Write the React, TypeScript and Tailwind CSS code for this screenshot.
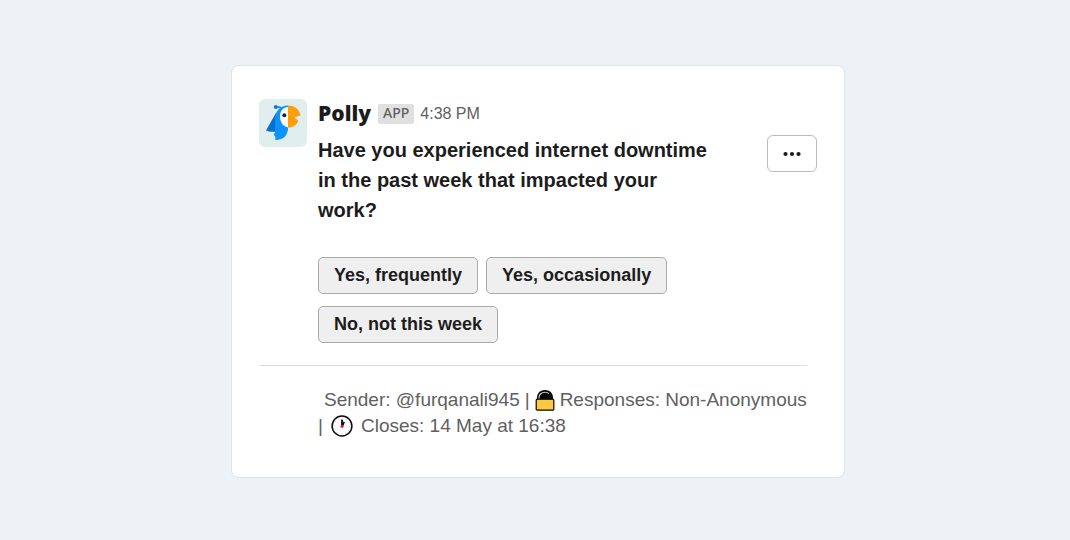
import { useState } from "react";

const QUESTION = "Have you experienced internet downtime in the past week that impacted your work?";
const OPTIONS = ["Yes, frequently", "Yes, occasionally", "No, not this week"];

function PollyAvatar() {
  return (
    <svg viewBox="0 0 48 48" className="size-12 shrink-0 rounded-md bg-[#e0eeed]" role="img" aria-label="Polly">
      <path d="M17.500 13 7 31.500q4 2 10.500 1z" fill="#0b6fcc" />
      <path d="M17 8q4-.5 6 2" fill="none" stroke="#1486ec" strokeWidth="1.600" />
      <circle cx="16.800" cy="8" r="1.900" fill="#0878db" />
      <path d="M29.200 6.500C20 6.500 16.200 13 16.200 20v11q0 2.500-1.700 5 1.800.5 1.800 2v3C25 41 29.200 36 29.200 27z" fill="#0b93ff" />
      <path d="M29.200 8c-5 0-8.200 4-8.200 9.500s3.500 10.500 8.200 11z" fill="#fff" />
      <path d="M29 6.500c7 0 11.500 4 12.500 9.700l-6 2.300 3.800 3.200c-1.500 4-5 6.800-10.300 6.800z" fill="#ff9d0a" />
      <circle cx="25.300" cy="16.200" r="2" fill="#16233f" />
    </svg>
  );
}

function LockIcon() {
  return (
    <svg viewBox="0 0 20 22" className="h-[22px] w-5" aria-hidden="true">
      <path d="M2 12V8.500C2 4 5.500 1 10 1s8 3 8 7.500V12z" fill="#050505" />
      <path d="M4 10V8.500C4 5.500 6.500 3.300 10 3.300q2.500 0 4 1.400" fill="none" stroke="#d0d0d0" strokeWidth="1.100" />
      <rect x="1.200" y="10.200" width="17.600" height="11" rx="1" fill="#ffc83d" stroke="#050505" strokeWidth="1.200" />
    </svg>
  );
}

function ClockIcon() {
  return (
    <svg viewBox="0 0 22 22" className="size-[22px]" aria-hidden="true">
      <circle cx="11" cy="11" r="9.900" fill="#fff" stroke="#0a0a0a" strokeWidth="1.500" />
      <circle cx="11" cy="11" r="7.800" fill="none" stroke="#aaa" strokeWidth="1" strokeDasharray=".6 3.484" />
      <path d="M10.100 11V5l.9-.8.9.8v6z" fill="#000" />
      <path d="m11 11 1.500-4.500 1.400.8L12 11.500z" fill="#000" />
      <circle cx="11" cy="11.200" r="1.500" fill="#e81224" />
    </svg>
  );
}

export default function App() {
  const [selected, setSelected] = useState<string | null>(null);

  return (
    <main className="flex min-h-screen items-center justify-center bg-[#ecf2f6] pt-[3px] pl-1.5 font-['Liberation_Sans',Arial,sans-serif] text-[#1d1c1d]">
      <article className="w-full max-w-[614px] rounded-lg border border-[#dde5e9] bg-white pt-[33px] pr-[27px] pb-[38px] pl-[27px]">
        <div className="flex gap-[11px]">
          <PollyAvatar />
          <div className="min-w-0 flex-1">
            <header className="flex h-[30px] items-center">
              <span className="font-['Noto_Sans',sans-serif] text-[21px] font-black">Polly</span>
              <span className="mr-1.5 ml-[7px] rounded-xs bg-[#e0e0e0] px-[5px] pb-0.5 font-['Noto_Sans',sans-serif] text-sm leading-[18px] font-medium text-[#616061]">APP</span>
              <time className="text-base text-[#616061]">4:38 PM</time>
            </header>
            <div className="flex items-start justify-between gap-4 pt-1.5">
              <h1 className="max-w-[400px] text-xl leading-[30px] font-bold">{QUESTION}</h1>
              <button aria-label="More actions" className="flex h-[37px] w-[50px] shrink-0 items-center justify-center rounded-md border border-[#bbb] bg-white">
                <svg viewBox="0 0 20 6" className="h-1.5 w-5" fill="currentColor" aria-hidden="true">
                  <circle cx="3.500" cy="3" r="2.100" />
                  <circle cx="10" cy="3" r="2.100" />
                  <circle cx="16.500" cy="3" r="2.100" />
                </svg>
              </button>
            </div>
            <div className="flex max-w-[400px] flex-wrap gap-x-2 gap-y-3 pt-8">
              {OPTIONS.map(option => (
                <button
                  key={option}
                  onClick={() => setSelected(option)}
                  aria-pressed={selected === option}
                  className="h-[37px] rounded-[5px] border border-[#aaa] bg-[#efefef] px-[15px] pb-px text-lg leading-6 font-bold aria-pressed:bg-[#dcdcdc]"
                >
                  {option}
                </button>
              ))}
            </div>
          </div>
        </div>
        <footer className="mt-[22px] mr-[10px] border-t border-[#ddd] pt-[21px] pl-[59px] text-[19px] leading-[26px] text-[#616061]">
          <div className="flex flex-wrap items-center gap-x-[5px]">
            <span className="pl-1.5">Sender: @furqanali945</span>
            <span>|</span>
            <LockIcon />
            <span>Responses: Non-Anonymous</span>
          </div>
          <div className="flex flex-wrap items-center gap-x-2">
            <span>|</span>
            <ClockIcon />
            <span>Closes: 14 May at 16:38</span>
          </div>
        </footer>
      </article>
    </main>
  );
}
